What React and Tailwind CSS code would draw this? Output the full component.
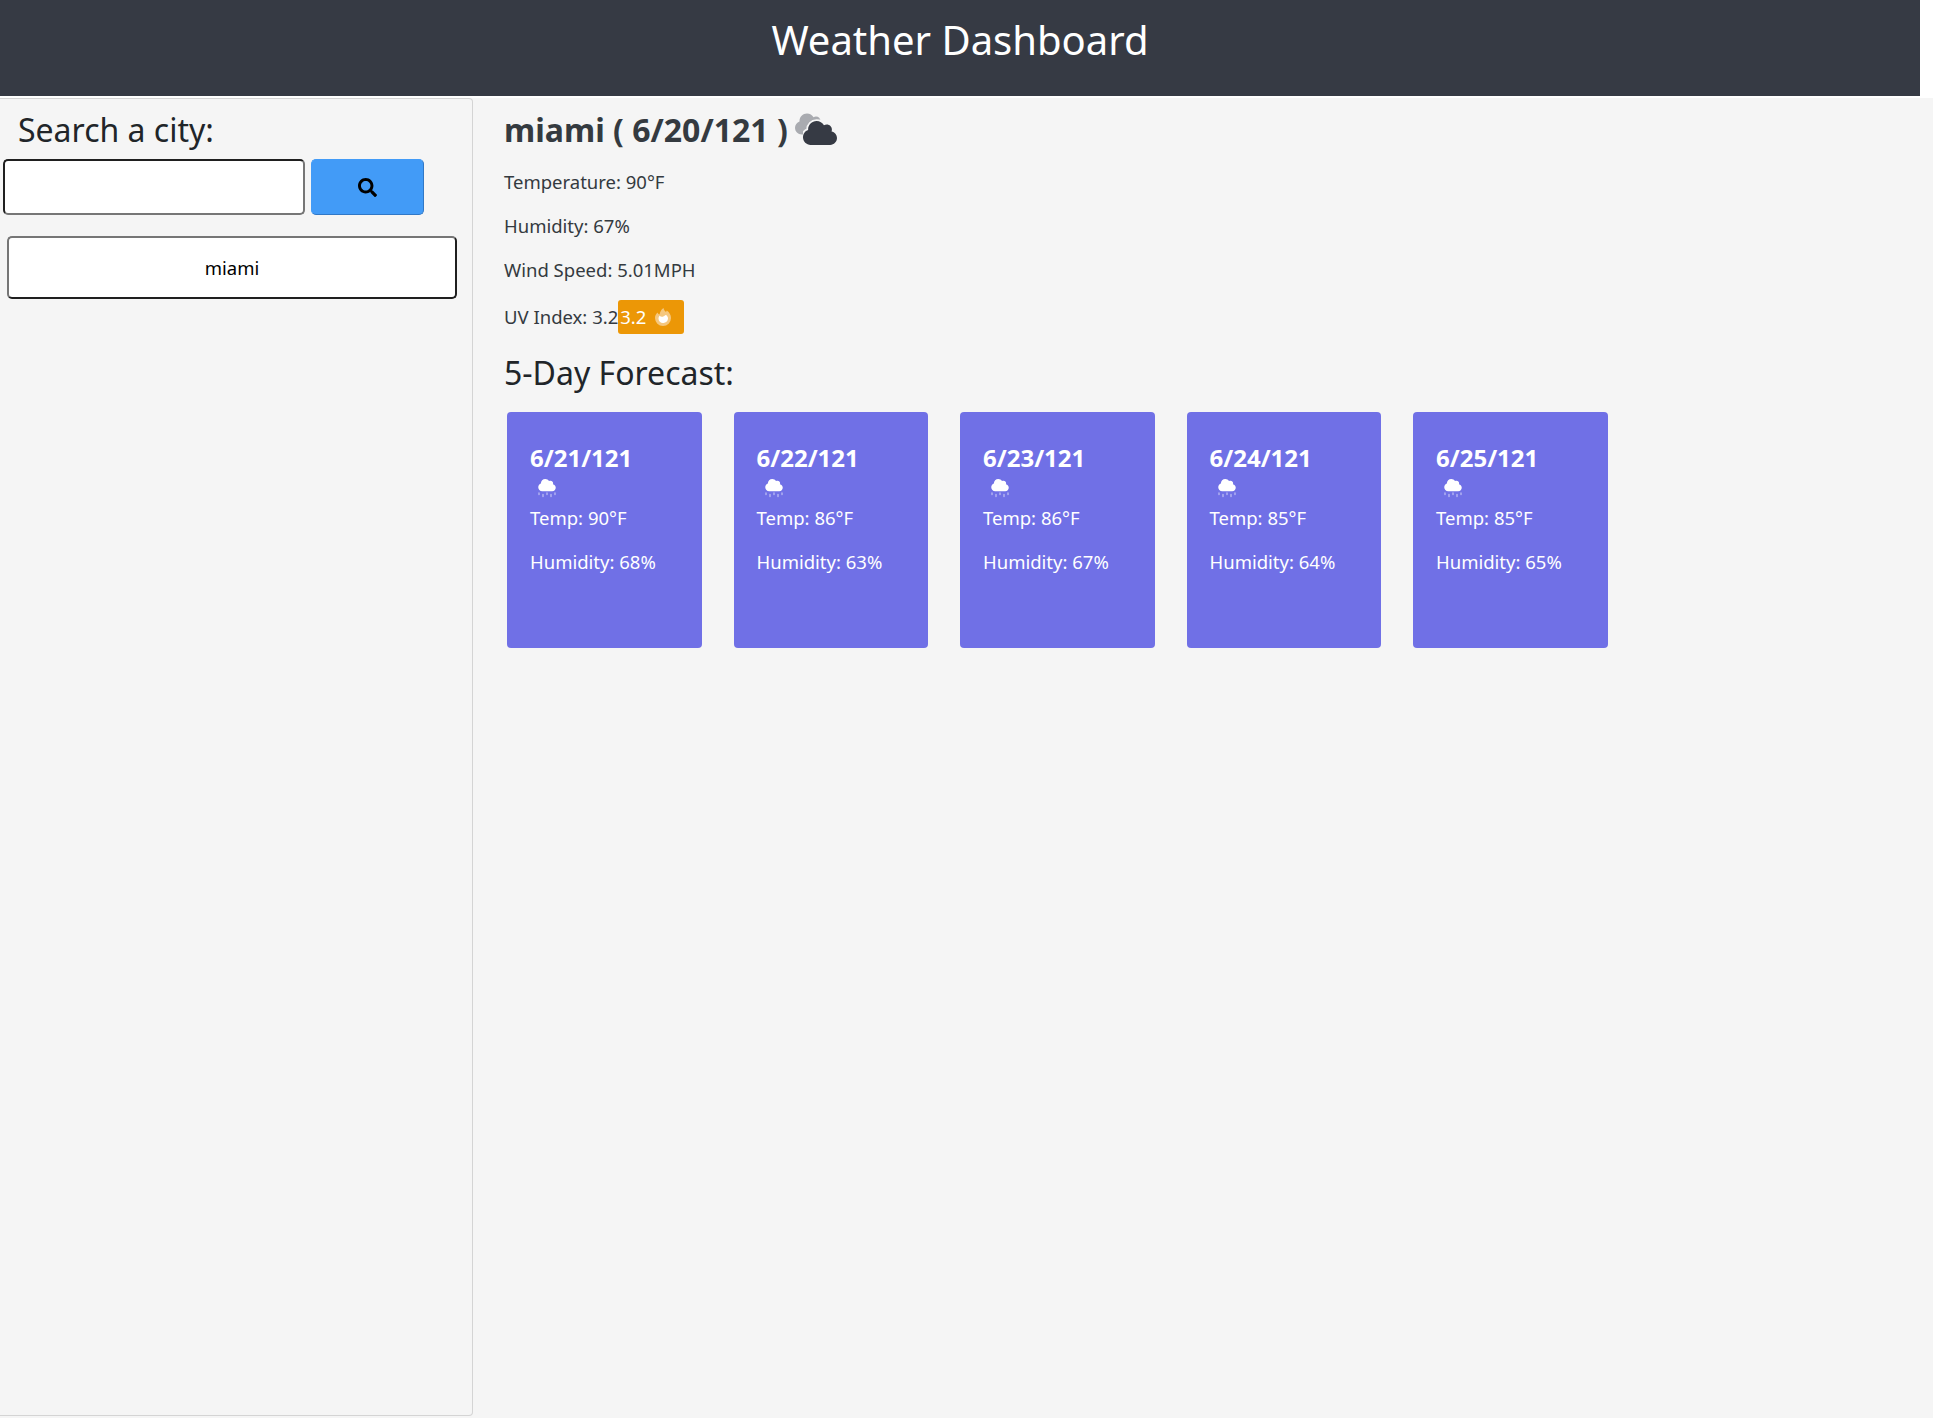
import React from "react";
import { FaSearch } from "react-icons/fa";

const cloudPath = "M537.6 226.6c4.1-10.7 6.4-22.4 6.4-34.6 0-53-43-96-96-96-19.7 0-38.1 6-53.3 16.2C367 64.2 315.3 32 256 32c-88.4 0-160 71.6-160 160 0 2.7.1 5.4.2 8.1C40.2 219.8 0 273.2 0 336c0 79.5 64.5 144 144 144h368c70.7 0 128-57.3 128-128 0-61.9-44-113.6-102.4-125.4z";

function Clouds() {
  return (
    <svg width="42" height="36" viewBox="0 0 42 36" className="shrink-0">
      <svg x="0" y="0" width="30" height="24" viewBox="0 0 640 512"><path d={cloudPath} fill="#a9abb0" /></svg>
      <svg x="8" y="6" width="34" height="30" viewBox="0 0 640 512"><path d={cloudPath} fill="#f5f5f5" stroke="#f5f5f5" strokeWidth="70" /><path d={cloudPath} fill="#363a44" /></svg>
    </svg>
  );
}

function Rain() {
  return (
    <svg width="20" height="20" viewBox="0 0 20 20" className="shrink-0">
      <svg x="0" y="0" width="20" height="14" viewBox="0 0 640 512"><path d={cloudPath} fill="#ffffff" /></svg>
      <g stroke="#bdbdf3" strokeWidth="1.3" strokeLinecap="round">
        <path d="M2 15v1.5M6 16.5v2M10 15v1.5M14 16.5v2M18 15v1.5" />
      </g>
    </svg>
  );
}

function Fire() {
  return (
    <svg width="18" height="20" viewBox="0 0 18 20" className="shrink-0">
      <path d="M9 19a8 8 0 0 1-8-8c0-2.400 1-4 2.500-5.500.5 1 1 1.600 2 2C6 5 7 2.500 9.500 1c.3 2 1.500 3 2.500 4 .3-.5.6-1 .8-1.500C15.500 5.500 17 8 17 11a8 8 0 0 1-8 8z" fill="#f5c77e" />
      <path d="M9 16a4.500 4.500 0 0 1-4.500-4.500c0-1.200.5-2 1.200-2.800.8 1.200 2.500 1.500 4 .6 1 -.6 1.500-1.500 2.300-1.300 1.500 1 2 2.300 2 3.500A4.500 4.500 0 0 1 9 16z" fill="#ffffff" />
    </svg>
  );
}

const days = [
  ["6/21/121", "90", "68"],
  ["6/22/121", "86", "63"],
  ["6/23/121", "86", "67"],
  ["6/24/121", "85", "64"],
  ["6/25/121", "85", "65"],
];

export default function App() {
  return (
    <div className="bg-white font-['Noto_Sans',sans-serif] h-[1418px] overflow-hidden">
      <header className="w-[1920px] h-24 bg-[#363a44] text-white text-center text-[40px] leading-[80px]">
        Weather Dashboard
      </header>
      <div className="mt-0.5 h-[1320px] bg-[#f5f5f5] flex items-start">
        <aside className="w-[473px] h-[1318px] border border-l-0 border-[#d4d4d4] rounded-r-[4px] shrink-0">
          <h2 className="pl-[18px] pt-[12px] text-[32px] leading-[38px] text-[#212529]">Search a city:</h2>
          <div className="flex gap-[6px] pl-[3px] mt-[10px]">
            <div className="w-[302px] h-[56px] bg-white rounded-[5px] border-2 border-t-[#1f1f1f] border-l-[#1f1f1f] border-r-[#767676] border-b-[#767676]" />
            <button className="w-[113px] h-[56px] bg-[#429bf7] rounded-[5px] border border-[#429bf7] border-r-[#3178c6] border-b-[#3178c6] flex items-center justify-center">
              <FaSearch className="text-black w-[19px] h-[19px]" />
            </button>
          </div>
          <button className="block ml-[7px] mt-[21px] w-[450px] h-[63px] bg-white rounded-[5px] border-2 border-t-[#767676] border-l-[#767676] border-r-[#1f1f1f] border-b-[#1f1f1f] text-[18.500px] text-black text-center">
            miami
          </button>
        </aside>
        <main className="pl-[31px] pt-[8px]">
          <h1 className="flex items-center gap-[7px] text-[32px] leading-[48px] font-bold text-[#343a40]">
            miami ( 6/20/121 )
            <Clouds />
          </h1>
          <p className="mt-[14px] text-[18.500px] leading-[28px] text-[#343a40]">Temperature: 90°F</p>
          <p className="mt-[16px] text-[18.500px] leading-[28px] text-[#343a40]">Humidity: 67%</p>
          <p className="mt-[16px] text-[18.500px] leading-[28px] text-[#343a40]">Wind Speed: 5.01MPH</p>
          <div className="mt-[16px] flex items-center text-[18.500px] leading-[28px] text-[#343a40]">
            UV Index: 3.2
            <span className="flex items-center gap-[8px] w-[66px] h-[34px] pl-[2px] bg-[#ec9706] text-white rounded-[3px]">
              3.2
              <Fire />
            </span>
          </div>
          <h2 className="mt-[15px] text-[32px] leading-[48px] text-[#212529]">5-Day Forecast:</h2>
          <div className="mt-[15px] ml-[3px] flex gap-[32px]">
            {days.map(([d, t, h]) => (
              <div key={d} className="w-[194.500px] h-[236px] bg-[#7070e6] rounded-[4px] text-white px-[23px] pt-[28px]">
                <div className="text-[24px] leading-[36px] font-bold">{d}</div>
                <div className="pl-[7px] mt-[2px] h-[24px]"><Rain /></div>
                <p className="mt-[2px] text-[18.500px] leading-[28px]">Temp: {t}°F</p>
                <p className="mt-[16px] text-[18.500px] leading-[28px]">Humidity: {h}%</p>
              </div>
            ))}
          </div>
        </main>
      </div>
    </div>
  );
}
